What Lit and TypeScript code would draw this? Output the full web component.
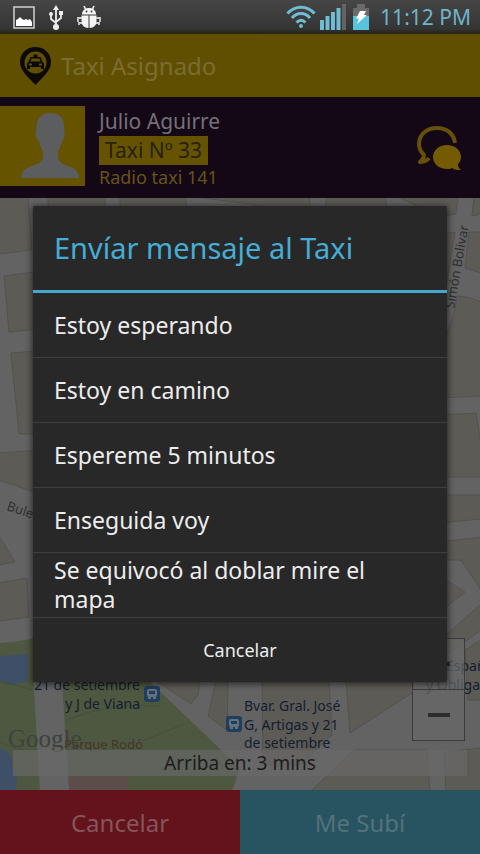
import { LitElement, html, css, svg } from "lit";
import { customElement, state } from "lit/decorators.js";

const MESSAGES = [
  "Estoy esperando",
  "Estoy en camino",
  "Espereme 5 minutos",
  "Enseguida voy",
  "Se equivocó al doblar mire el mapa",
];

@customElement("status-bar")
class StatusBar extends LitElement {
  static styles = css`
    :host {
      display: flex;
      align-items: center;
      justify-content: space-between;
      box-sizing: border-box;
      height: 34px;
      padding: 0 9px 0 13px;
      background: linear-gradient(#464646, #343434 85%, #262415);
      color: #70b4c8;
      font-size: 21px;
    }
    .left,
    .right {
      display: flex;
      align-items: center;
    }
    .left {
      gap: 14px;
    }
    .right {
      gap: 4px;
    }
    svg {
      display: block;
    }
    .clock {
      margin-left: 4px;
      line-height: 34px;
    }
  `;
  render() {
    return html`
      <div class="left">
        <svg width="22" height="23" viewBox="0 0 22 23">
          <rect x="1" y="1" width="20" height="21" fill="none" stroke="#c9c9c9" stroke-width="1.6" />
          <path d="M3 20v-6l2-1 2-2 2 2 2 1 2-1 2 1 2-1 2 3v4z" fill="#fff" />
        </svg>
        <svg width="14" height="25" viewBox="0 0 14 25">
          <path d="M7 0l3 5H4z" fill="#eee" />
          <path d="M7 4v18M2 9v5l5 4M12 8v5l-5 4" fill="none" stroke="#eee" stroke-width="1.8" />
          <circle cx="2" cy="9" r="2" fill="#eee" />
          <rect x="10" y="6" width="4" height="4" fill="#eee" />
          <circle cx="7" cy="22" r="3" fill="#eee" />
        </svg>
        <svg width="24" height="24" viewBox="0 0 24 24" fill="#f4f4f4">
          <path d="M5 9.500c0-4 3-6.500 7-6.500s7 2.500 7 6.500z" />
          <path d="M7 1l2 4M17 1l-2 4" stroke="#f4f4f4" stroke-width="1.600" />
          <circle cx="9.500" cy="6.500" r="1" fill="#444" />
          <circle cx="14.500" cy="6.500" r="1" fill="#444" />
          <path d="M4.500 10.500h7v12.500c-4.500 0-7-3-7-6.500zM12.500 10.500h7v6c0 3.500-2.500 6.500-7 6.500z" />
          <path d="M5 13H1v4M5 18H2v2M19 13h4v4M19 18h3v2" fill="none" stroke="#ccc" stroke-width="1.800" />
        </svg>
      </div>
      <div class="right">
        <svg width="30" height="24" viewBox="0 0 30 24" fill="none" stroke="#70bcd2" stroke-width="3">
          <path d="M1.500 8.500C9 0 21 0 28.500 8.500M6 13c5-6 13-6 18 0M10.500 17.500c3-3 6-3 9 0" />
          <circle cx="15" cy="21" r="2" fill="#70bcd2" stroke="none" />
        </svg>
        <svg width="26" height="26" viewBox="0 0 26 26" fill="#70bcd2">
          <path d="M0 16h4v10H0zM5.500 12h4v14h-4zM11 8h4v18h-4zM16.500 4h4v22h-4z" />
          <path d="M22 0h4v26h-4z" fill="#636363" />
        </svg>
        <svg width="22" height="26" viewBox="0 0 22 26">
          <path d="M3 4h4V0h8v4h4v22H3z" fill="#6a6a6a" />
          <path d="M3 12h16v14H3z" fill="#58c3dc" />
          <path d="M10 7h6l-2 4h3L7 20l2-5.500H6z" fill="#fff" />
        </svg>
        <span class="clock">11:12 PM</span>
      </div>
    `;
  }
}

@customElement("driver-card")
class DriverCard extends LitElement {
  static styles = css`
    :host {
      display: flex;
      align-items: flex-start;
      box-sizing: border-box;
      min-height: 100px;
      padding: 8px 18px 8px 0;
      background: #140716;
      font-size: 21px;
    }
    .avatar {
      display: block;
      width: 85px;
      height: 80px;
      background: #655300;
    }
    .info {
      flex: 1;
      display: flex;
      flex-direction: column;
      align-items: flex-start;
      padding-left: 14px;
    }
    .name {
      line-height: 30px;
      color: #757178;
    }
    .tag {
      padding: 0 6px;
      line-height: 29px;
      background: #655300;
      color: #2a2016;
    }
    .company {
      line-height: 25px;
      font-size: 18px;
      color: #665417;
    }
    .chat {
      display: block;
      align-self: center;
      padding: 0;
      border: 0;
      background: none;
    }
    .chat svg {
      display: block;
    }
  `;
  render() {
    return html`
      <svg class="avatar" viewBox="0 0 85 80" role="img" aria-label="Foto del conductor">
        <path
          fill="#5c5d5e"
          d="M50 7c-9 0-14 6-13.500 15l-.5 4c-1 5 1 8 3 9 1 6 3 8 4 10v6c-1 5-5 7-11 9-6 2-11 5-11 12h58c0-7-5-10-11-12-6-2-9-4-10-9v-6c2-3 3-5 4-10 2-1 3-4 2.500-9l-.5-4C65 13 60 7 50 7z"
        />
      </svg>
      <div class="info">
        <span class="name">Julio Aguirre</span>
        <span class="tag">Taxi Nº 33</span>
        <span class="company">Radio taxi 141</span>
      </div>
      <button class="chat" aria-label="Mensajes">
        <svg width="46" height="44" viewBox="0 0 46 44">
          <path
            d="M39 17C38 8 31 2 21 2 10 2 3 9 3 18c0 5 2 8 5 11 0 3-2 5-4 7 4 0 7-1 9-4"
            fill="none" stroke="#66500a" stroke-width="4" stroke-linejoin="round"
          />
          <path
            fill="#755b00"
            d="M31 19c8 0 14 5 14 12 0 3-1 5-3 7 0 3 1 4 3 6-3 0-6 0-9-2-2 1-3 1-5 1-8 0-14-5-14-12s6-12 14-12z"
          />
        </svg>
      </button>
    `;
  }
}

const busStop = (x: number, y: number) => svg`
  <g transform="translate(${x} ${y})">
    <rect width="16" height="16" rx="3" fill="#1f3f5e" />
    <rect x="3" y="3" width="10" height="8" rx="2" fill="#65717c" />
    <rect x="5" y="5" width="6" height="3" fill="#1f3f5e" />
    <path d="M4 11h3v2H4zM9 11h3v2H9z" fill="#65717c" />
  </g>`;

@customElement("city-map")
class CityMap extends LitElement {
  static styles = css`
    :host {
      position: relative;
      display: flex;
      flex-direction: column;
      justify-content: flex-end;
      padding: 0 13px 14px;
      overflow: hidden;
      background: #636363;
    }
    .streets {
      position: absolute;
      inset: 0;
      width: 100%;
      height: 100%;
    }
    .block {
      fill: #5d5b56;
      stroke: #53524f;
    }
    .park {
      fill: #4e573f;
    }
    .water {
      fill: #404f68;
    }
    .street {
      font-size: 13px;
      fill: #30302f;
    }
    .stop {
      font-size: 14px;
      fill: #141d30;
    }
    .place {
      font-size: 13px;
      fill: #43342c;
    }
    .brand {
      font: 25px "Liberation Serif", serif;
      fill: #3e423b;
    }
    .zoom {
      position: absolute;
      right: 15px;
      bottom: 49px;
      display: flex;
      flex-direction: column;
    }
    .zoom button {
      box-sizing: border-box;
      width: 53px;
      height: 52px;
      padding: 0;
      border: 1px solid #3b3b3b;
      background: rgba(104, 104, 104, 0.7);
    }
    .zoom svg {
      display: block;
      margin: auto;
    }
    .zoom button + button {
      margin-top: -1px;
    }
    .eta {
      position: relative;
      margin: 0;
      line-height: 26px;
      background: rgba(106, 106, 106, 0.65);
      color: #1c1c1c;
      font-size: 19px;
      text-align: center;
    }
  `;
  render() {
    return html`
      <svg class="streets" viewBox="0 198 480 592" preserveAspectRatio="xMidYMid slice">
        <g class="block">
          <path d="M-1 197H28L32 250L-1 254z" />
          <path d="M4 276L50 270V328L9 332z" />
          <path d="M11 353L50 350V434H19z" />
          <path d="M48 197H105V220H48zM120 197H186V220H120zM195 197H310V220L250 204zM326 197H386V220H326zM398 197H458L456 214L440 217z" />
          <path d="M-1 453L40 450V494L-1 480z" />
          <path d="M-1 536L15 562L-1 565z" />
          <path d="M-1 583L27 578L29 617L-1 621z" />
          <path d="M474 197H481V214L472 216z" />
          <path d="M440 235L455 232L444 300z" />
          <path d="M469 232H481V273L465 268z" />
          <path d="M440 350Q455 318 457 296Q470 296 481 302V396L440 398z" />
          <path d="M440 415L476 413L481 445V477H440z" />
          <path d="M440 495H481V519L440 523z" />
          <path d="M440 542L481 537V590L461 560H440z" />
          <path d="M440 576L465 592L440 612z" />
          <path d="M440 640L481 604V630L440 660z" />
          <path d="M465 650L481 640V700H468z" />
          <path d="M155 680H200L198 695L191 704L170 690z" />
          <path d="M216 680H228L227 730L208 716z" />
          <path d="M262 680H329L332 735L300 765H263z" />
          <path d="M346 680H415L412 693L350 733z" />
          <path d="M354 750H427L430 791H311z" />
          <path d="M444 752L481 748V791H446z" />
        </g>
        <path class="park" d="M-1 643Q18 642 34 638V690L40 791H-1z" />
        <path class="water" d="M-1 656L28 654V681Q8 688 -1 680z" />
        <path class="water" d="M-1 748Q14 752 12 766Q20 778 15 791H-1z" />
        <path class="park" d="M62 680H148L240 768L232 791H69z" />
        <path d="M69 776H128V791H69z" fill="#5b4d49" />
        <path d="M0 682Q16 684 32 690M0 742Q16 750 36 752M66 720Q110 702 160 706M142 741L184 724" fill="none" stroke="#454f39" />
        <text class="street" transform="translate(6 510) rotate(18)">Bulevar</text>
        <text class="street" transform="translate(454 309) rotate(-80)">Simón Bolivar</text>
        <text class="stop" text-anchor="end" x="140" y="690">21 de setiembre</text>
        <text class="stop" text-anchor="end" x="140" y="709">y J de Viana</text>
        ${busStop(144, 686)} ${busStop(226, 716)}
        <text class="stop" x="244" y="711">Bvar. Gral. José</text>
        <text class="stop" x="244" y="730">G, Artigas y 21</text>
        <text class="stop" x="244" y="748">de setiembre</text>
        <text class="stop" x="446" y="671">España</text>
        <text class="stop" x="426" y="690">y Obligado</text>
        <text class="place" x="64" y="749">Parque Rodó</text>
        <text class="brand" x="8" y="747">Google</text>
      </svg>
      <div class="zoom">
        <button aria-label="Acercar">
          <svg width="24" height="24" viewBox="0 0 24 24"><path d="M1 10h9V1h4v9h9v4h-9v9h-4v-9H1z" fill="#2d2d2d" /></svg>
        </button>
        <button aria-label="Alejar">
          <svg width="24" height="24" viewBox="0 0 24 24"><path d="M1 10h22v4H1z" fill="#2d2d2d" /></svg>
        </button>
      </div>
      <p class="eta">Arriba en: 3 mins</p>
    `;
  }
}

@customElement("message-dialog")
class MessageDialog extends LitElement {
  static styles = css`
    :host {
      display: flex;
      align-items: center;
      justify-content: center;
    }
    .panel {
      flex: 1;
      max-width: 560px;
      border-radius: 2px;
      background: #282828;
      box-shadow: 0 1px 6px 1px rgba(0, 0, 0, 0.6);
      color: #ededed;
      overflow: hidden;
    }
    .title {
      margin: 0;
      padding: 0 21px;
      border-bottom: 3px solid #45a7cf;
      color: #45add6;
      font-size: 29px;
      font-weight: 400;
      line-height: 84px;
    }
    .list {
      margin: 0;
      padding: 0;
      list-style: none;
    }
    button {
      display: block;
      box-sizing: border-box;
      width: 100%;
      border: 0;
      background: none;
      color: inherit;
      font: inherit;
    }
    .item {
      height: 65px;
      padding: 0 21px;
      border-bottom: 1px solid #3e3e3e;
      font-size: 23px;
      line-height: 29px;
      text-align: left;
    }
    .cancel {
      height: 64px;
      font-size: 18px;
    }
  `;
  private close() {
    this.dispatchEvent(new CustomEvent("close"));
  }
  render() {
    return html`
      <section class="panel" role="dialog" aria-labelledby="title">
        <h2 class="title" id="title">Envíar mensaje al Taxi</h2>
        <ul class="list">
          ${MESSAGES.map((m) => html`<li><button class="item" @click=${this.close}>${m}</button></li>`)}
        </ul>
        <button class="cancel" @click=${this.close}>Cancelar</button>
      </section>
    `;
  }
}

@customElement("app-root")
class AppRoot extends LitElement {
  @state() private open = true;

  static styles = css`
    :host {
      position: relative;
      display: flex;
      flex-direction: column;
      min-height: 100vh;
      background: #140716;
      font-family: "Noto Sans", "Open Sans", sans-serif;
    }
    .bar {
      display: flex;
      align-items: center;
      gap: 10px;
      box-sizing: border-box;
      height: 64px;
      padding: 0 20px;
      border-bottom: 1px solid #100800;
      background: #614f00;
      color: #7b6c35;
    }
    .bar h1 {
      margin: 0;
      font-size: 24px;
      font-weight: 400;
    }
    city-map {
      flex: 1;
    }
    .actions {
      display: grid;
      grid-template-columns: 1fr 1fr;
    }
    .actions button {
      height: 64px;
      padding: 0;
      border: 0;
      font: inherit;
      font-size: 24px;
    }
    .reject {
      background: #64121b;
      color: #84565a;
    }
    .accept {
      background: #285360;
      color: #52727c;
    }
    message-dialog {
      position: absolute;
      inset: 34px 33px 0;
    }
  `;
  render() {
    return html`
      <status-bar></status-bar>
      <header class="bar">
        <svg width="31" height="38" viewBox="0 0 31 38">
          <path fill="#0c0a08" fill-rule="evenodd" d="M15.500 0C24 0 31 6 31 15c0 8-7 14-15.500 23C7 29 0 23 0 15 0 6 7 0 15.500 0zm0 4.500A11 11 0 1 0 15.500 26.500 11 11 0 0 0 15.500 4.500z" />
          <path fill="#0c0a08" fill-rule="evenodd" d="M13.500 7.500h4V10h3l2 5 1.500 1.500V22h-3v-2H10v2H7v-5.500L8.500 15l2-5h3zM11.500 11.500l-1 3h10l-1-3zM9 16.500v2h3v-2zM19 16.500v2h3v-2z" />
        </svg>
        <h1>Taxi Asignado</h1>
      </header>
      <driver-card></driver-card>
      <city-map></city-map>
      <div class="actions">
        <button class="reject">Cancelar</button>
        <button class="accept">Me Subí</button>
      </div>
      ${this.open ? html`<message-dialog @close=${() => (this.open = false)}></message-dialog>` : null}
    `;
  }
}
